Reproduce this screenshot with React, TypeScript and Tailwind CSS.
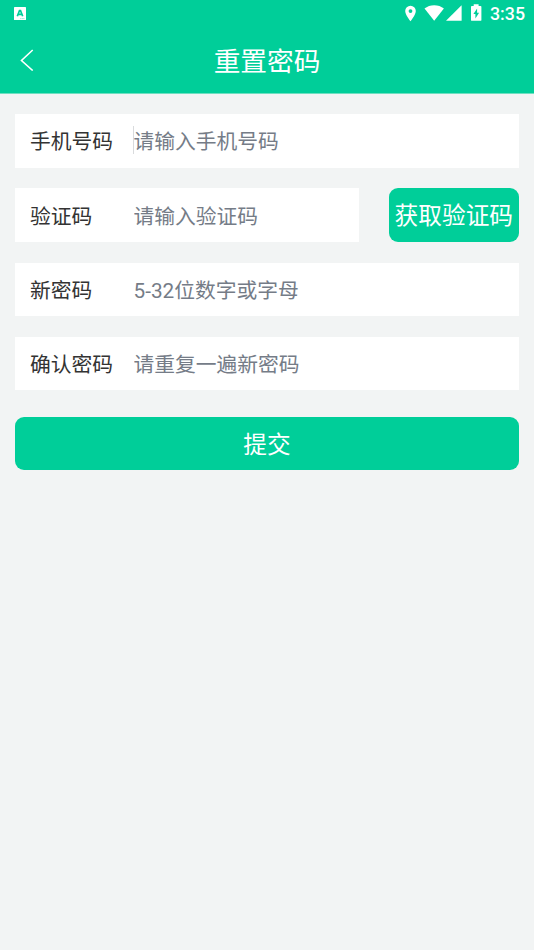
import React from "react";

function StatusBar() {
  return (
    <div className="flex h-[27px] items-center justify-between pr-[9px] pl-[14px] text-white">
      <svg width="12" height="13" viewBox="0 0 12 13" aria-hidden="true">
        <rect width="12" height="13" rx="0.6" fill="#fff" />
        <path d="M3.300 9.300 5.500 3.500h1L8.700 9.300M4.400 7.400h3.200" fill="none" stroke="#00ce99" strokeWidth="1.700" />
        <path d="M6.300 11.600h4.600" stroke="#00ce99" strokeWidth="0.8" strokeDasharray="1 0.5" opacity="0.6" />
      </svg>
      <div className="flex h-full items-center">
        <svg width="82" height="27" viewBox="400 0 82 27" fill="#fff" aria-hidden="true">
          <path
            fillRule="evenodd"
            d="M410.500 5.800a5.300 5.300 0 0 0-5.300 5.300c0 4 5.300 10.200 5.300 10.200s5.300-6.200 5.300-10.200a5.300 5.300 0 0 0-5.300-5.300zm0 3.400a1.900 1.900 0 1 1 0 3.800 1.900 1.900 0 0 1 0-3.800z"
          />
          <path d="M424.500 8.600C427.200 6.500 430.500 5.300 434.200 5.300s7 1.200 9.700 3.300L434.200 20.700z" />
          <path d="M461.600 5.300v15.500H446z" />
          <path
            fillRule="evenodd"
            d="M473.700 4.300h4.900v1.600h1.900q.9 0 .9.900v13.100q0 .9-.9.900h-8.600q-.9 0-.9-.9V6.800q0-.9.900-.9h1.800zM477.100 8.500l-3.700 5.500h2v4.500l3.700-5.700h-2z"
          />
        </svg>
        <span className="ml-[8px] w-[35px] font-[Roboto,sans-serif] text-[17.8px] leading-[27px] font-medium whitespace-nowrap">
          3:35
        </span>
      </div>
    </div>
  );
}

function Field({ label, placeholder, focused = false }: { label: string; placeholder: string; focused?: boolean }) {
  return (
    <label className="flex h-[53.4px] w-full min-w-0 items-center bg-white pl-[15px] text-[20.77px]">
      <span className="w-[103px] shrink-0 pt-1 whitespace-nowrap text-[#333]">{label}</span>
      <span className={`h-7 w-px shrink-0 -translate-y-px ${focused ? "bg-[#d9dbdd]" : "bg-transparent"}`} />
      <input
        className="-ml-[0.5px] h-full w-full min-w-0 bg-transparent pt-[3px] text-[#757c87] outline-none placeholder:text-[#757c87] placeholder:opacity-100"
        placeholder={placeholder}
      />
    </label>
  );
}

export default function App() {
  return (
    <div className="flex h-[950px] w-[534px] flex-col overflow-hidden bg-[#f2f4f4] font-[Roboto,'Noto_Sans_CJK_SC',sans-serif]">
      <header className="h-[94px] shrink-0 border-b border-[#6fdfc0] bg-[#00ce99]">
        <StatusBar />
        <div className="grid h-[66px] grid-cols-[60px_1fr_60px] items-center text-white">
          <button className="pl-5" aria-label="返回">
            <svg width="14" height="22" viewBox="0 0 14 22" fill="none" stroke="#fff" strokeWidth="1.6" aria-hidden="true">
              <path d="M12.700 1 1.500 11.500l11.200 10" />
            </svg>
          </button>
          <h1 className="pt-[5px] text-center text-[26.7px] leading-[61px] font-normal">重置密码</h1>
        </div>
      </header>
      <main className="flex flex-col gap-[20.8px] px-[15px] pt-[20.3px]">
        <Field label="手机号码" placeholder="请输入手机号码" focused />
        <div className="flex gap-[29.6px]">
          <Field label="验证码" placeholder="请输入验证码" />
          <button className="h-[53.4px] w-[130.4px] shrink-0 rounded-[9px] bg-[#00ce99] pt-1 text-[23.7px] whitespace-nowrap text-white">
            获取验证码
          </button>
        </div>
        <Field label="新密码" placeholder="5-32位数字或字母" />
        <Field label="确认密码" placeholder="请重复一遍新密码" />
        <button className="mt-[6px] h-[53.4px] rounded-[9px] bg-[#00ce99] pt-1 text-[23.7px] text-white">提交</button>
      </main>
    </div>
  );
}
